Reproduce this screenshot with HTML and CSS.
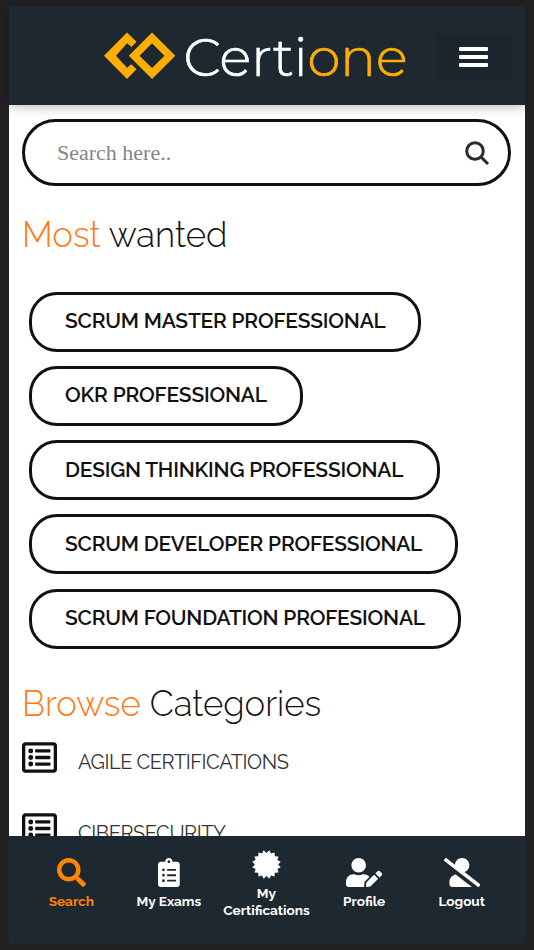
FILE: index.html
```
<!DOCTYPE html>
<html lang="en">
<head>
  <meta charset="UTF-8" />
  <meta name="viewport" content="width=device-width, initial-scale=1.0"/>
  <title>Certione</title>
  <link rel="stylesheet" href="styles.css">
</head>
<body>
  <div class="app">
    <header class="header">
      <svg class="logo" width="310" height="64" viewBox="0 0 310 64">
        <path class="logo-mark" d="M23 2.500L32.500 11.700L27.500 17L23 13.300L12 25.700L23 37.700L27.300 34.300L32.500 39.300L23 49L0 25.700Z" />
        <path class="logo-mark" fill-rule="evenodd" d="M48 2.500L71.300 25.700L48 49L24.800 25.700ZM48 13.300L35.500 25.700L48 38L60.500 25.700Z" />
        <text class="logo-text" x="79.500" y="46" textLength="224" lengthAdjust="spacingAndGlyphs">Certi<tspan class="logo-accent">one</tspan></text>
      </svg>
      <button class="menu-button" aria-label="Menu">
        <span class="menu-bar"></span>
        <span class="menu-bar"></span>
        <span class="menu-bar"></span>
      </button>
    </header>

    <main class="content">
      <form class="search">
        <input class="search-input" type="text" placeholder="Search here.." />
        <svg class="search-icon" width="26" height="26" viewBox="0 0 26 26">
          <circle cx="11" cy="11" r="8.300" />
          <path d="M17 17L24 24" />
        </svg>
      </form>

      <h2 class="title wanted-title"><span class="accent">Most</span> wanted</h2>
      <div class="wanted">
        <a class="pill scrum-master"><span>SCRUM MASTER PROFESSIONAL</span></a>
        <a class="pill okr"><span>OKR PROFESSIONAL</span></a>
        <a class="pill design"><span>DESIGN THINKING PROFESSIONAL</span></a>
        <a class="pill scrum-developer"><span>SCRUM DEVELOPER PROFESSIONAL</span></a>
        <a class="pill scrum-foundation"><span>SCRUM FOUNDATION PROFESIONAL</span></a>
      </div>

      <h2 class="title browse-title"><span class="accent">Browse</span> Categories</h2>
      <ul class="categories">
        <li class="category">
          <svg class="category-icon"><use href="#list-alt" /></svg>
          <span>AGILE CERTIFICATIONS</span>
        </li>
        <li class="category">
          <svg class="category-icon"><use href="#list-alt" /></svg>
          <span>CIBERSECURITY</span>
        </li>
      </ul>
    </main>

    <nav class="tabs">
      <a class="tab active">
        <svg class="tab-icon" viewBox="0 0 512 512"><path d="M505 442.700L405.300 343c-4.500-4.500-10.600-7-17-7H372c27.600-35.300 44-79.700 44-128C416 93.100 322.900 0 208 0S0 93.100 0 208s93.100 208 208 208c48.300 0 92.700-16.400 128-44v16.300c0 6.400 2.500 12.500 7 17l99.700 99.700c9.400 9.400 24.600 9.400 33.900 0l28.300-28.300c9.400-9.400 9.400-24.600.1-34zM208 336c-70.700 0-128-57.200-128-128 0-70.700 57.200-128 128-128 70.700 0 128 57.200 128 128 0 70.700-57.200 128-128 128z" /></svg>
        <span>Search</span>
      </a>
      <a class="tab">
        <svg class="tab-icon" viewBox="0 0 384 512"><path d="M336 64h-80c0-35.300-28.700-64-64-64s-64 28.700-64 64H48C21.500 64 0 85.500 0 112v352c0 26.500 21.500 48 48 48h288c26.500 0 48-21.500 48-48V112c0-26.500-21.500-48-48-48zM96 424c-13.300 0-24-10.700-24-24s10.700-24 24-24 24 10.700 24 24-10.700 24-24 24zm0-96c-13.300 0-24-10.700-24-24s10.700-24 24-24 24 10.700 24 24-10.700 24-24 24zm0-96c-13.300 0-24-10.700-24-24s10.700-24 24-24 24 10.700 24 24-10.700 24-24 24zm96-192c13.300 0 24 10.700 24 24s-10.700 24-24 24-24-10.700-24-24 10.700-24 24-24zm128 368c0 4.400-3.600 8-8 8H168c-4.400 0-8-3.600-8-8v-16c0-4.400 3.600-8 8-8h144c4.400 0 8 3.600 8 8v16zm0-96c0 4.400-3.600 8-8 8H168c-4.400 0-8-3.600-8-8v-16c0-4.400 3.600-8 8-8h144c4.400 0 8 3.600 8 8v16zm0-96c0 4.400-3.600 8-8 8H168c-4.400 0-8-3.600-8-8v-16c0-4.400 3.600-8 8-8h144c4.400 0 8 3.600 8 8v16z" /></svg>
        <span>My Exams</span>
      </a>
      <a class="tab">
        <svg class="tab-icon" viewBox="-15 -15 30 30"><path d="M0 -12L2.930 -14.700L4.670 -11.270L8.330 -12.470L8.630 -8.630L12.470 -8.330L11.270 -4.670L14.700 -2.930L12 0L14.700 2.930L11.270 4.670L12.470 8.330L8.630 8.630L8.330 12.470L4.670 11.270L2.930 14.700L0 12L-2.930 14.700L-4.670 11.270L-8.330 12.470L-8.630 8.630L-12.470 8.330L-11.270 4.670L-14.700 2.930L-12 0L-14.700 -2.930L-11.270 -4.670L-12.470 -8.330L-8.630 -8.630L-8.330 -12.470L-4.670 -11.270L-2.930 -14.700Z" /></svg>
        <span>My<br />Certifications</span>
      </a>
      <a class="tab">
        <svg class="tab-icon" viewBox="0 0 640 512"><path d="M224 256c70.700 0 128-57.300 128-128S294.700 0 224 0 96 57.300 96 128s57.300 128 128 128zm89.600 32h-16.700c-22.200 10.200-46.900 16-72.900 16s-50.600-5.800-72.900-16h-16.700C60.200 288 0 348.200 0 422.400V464c0 26.500 21.500 48 48 48h274.900c-2.400-6.800-3.400-14-2.600-21.300l6.800-60.900 1.200-11.100 7.900-7.900 77.300-77.300c-24.500-27.700-60-45.500-99.900-45.500zm45.300 145.300l-6.800 61c-1.100 10.200 7.500 18.800 17.600 17.600l60.900-6.800 137.900-137.900-71.700-71.700-137.900 137.800zM633 268.900L595.100 231c-9.300-9.300-24.500-9.300-33.800 0l-37.800 37.800-4.100 4.100 71.800 71.700 41.800-41.800c9.300-9.400 9.300-24.500 0-33.900z" /></svg>
        <span>Profile</span>
      </a>
      <a class="tab">
        <svg class="tab-icon" viewBox="0 0 640 512"><path d="M633.800 458.100L362.300 248.300C412.100 230.700 448 183.800 448 128 448 57.300 390.700 0 320 0c-67.100 0-121.500 51.800-126.900 117.400L45.500 3.400C38.500-2 28.500-.8 23 6.200L3.400 31.400c-5.400 7-4.200 17 2.800 22.400l588.400 454.700c7 5.500 17 4.200 22.500-2.800l19.600-25.300c5.400-6.800 4.100-16.900-2.900-22.300zM96 422.400V464c0 26.500 21.500 48 48 48h350.200L207.400 290.300C144.200 301.300 96 356 96 422.400z" /></svg>
        <span>Logout</span>
      </a>
    </nav>
  </div>

  <svg width="0" height="0" class="sprite">
    <symbol id="list-alt" viewBox="0 32 512 448">
      <path fill-rule="evenodd" d="M464 32H48C21.500 32 0 53.500 0 80v352c0 26.500 21.500 48 48 48h416c26.500 0 48-21.500 48-48V80c0-26.500-21.500-48-48-48zm-6 400H54a6 6 0 0 1-6-6V86a6 6 0 0 1 6-6h404a6 6 0 0 1 6 6v340a6 6 0 0 1-6 6z" />
      <circle cx="128" cy="160" r="36" />
      <circle cx="128" cy="256" r="36" />
      <circle cx="128" cy="352" r="36" />
      <rect x="192" y="136" width="224" height="48" rx="12" />
      <rect x="192" y="232" width="224" height="48" rx="12" />
      <rect x="192" y="328" width="224" height="48" rx="12" />
    </symbol>
  </svg>
</body>
</html>
```
FILE: styles.css
```
* {
  box-sizing: border-box;
}
body {
  margin: 0;
  height: 950px;
  padding: 6px 9.5px 7px 8.5px;
  background-color: #222224;
  font-family: Raleway, Lato, sans-serif;
  overflow: hidden;
}
.app {
  display: flex;
  flex-direction: column;
  height: 937px;
  background-color: white;
}
.header {
  display: flex;
  align-items: flex-start;
  flex-shrink: 0;
  height: 99px;
  padding: 24px 14px 0 95px;
  background-color: #1e2831;
  box-shadow: 0 1px 12px rgba(0, 0, 0, 0.3);
}
.logo {
  display: block;
  flex-shrink: 0;
  overflow: visible;
}
.logo-mark {
  fill: #ffae00;
}
.logo-text {
  font-family: Montserrat, Lato, sans-serif;
  font-size: 53px;
  font-weight: 300;
  fill: white;
  stroke: white;
  stroke-width: 0.7px;
}
.logo-accent {
  fill: #ffae00;
  stroke: #ffae00;
}
.menu-button {
  display: flex;
  flex-direction: column;
  align-items: center;
  justify-content: center;
  gap: 4px;
  width: 75px;
  height: 46px;
  margin: 4px 0 0 auto;
  padding: 0;
  border: none;
  border-radius: 4px;
  background-color: #1c252e;
}
.menu-bar {
  width: 29px;
  height: 4px;
  border-radius: 1px;
  background-color: white;
}
.content {
  flex: 1;
  min-height: 0;
  padding: 14px 14px 0 13.500px;
  overflow: hidden;
}
.search {
  display: flex;
  align-items: center;
  height: 67px;
  padding: 0 17.500px 0 32px;
  border: 3px solid #111;
  border-radius: 34px;
}
.search-input {
  flex: 1;
  min-width: 0;
  padding: 0;
  border: none;
  outline: none;
  background: none;
  font-family: "Liberation Serif", serif;
  font-size: 22px;
}
.search-input::placeholder {
  color: #858585;
}
.search-icon {
  fill: none;
  stroke: #2b2b2b;
  stroke-width: 3;
}
.title {
  margin: 0;
  font-size: 34.800px;
  font-weight: 300;
  line-height: 42px;
  color: #111;
  white-space: nowrap;
}
.accent {
  color: #ff7a14;
}
.wanted-title {
  margin-top: 28px;
}
.wanted {
  display: flex;
  flex-direction: column;
  align-items: flex-start;
  gap: 14.300px;
  margin: 35.500px 0 0 7px;
}
.pill {
  display: flex;
  align-items: center;
  height: 60px;
  padding: 0 0 2px 33px;
  border: 3px solid #111;
  border-radius: 28px;
  color: #111;
  font-size: 20.900px;
  font-weight: 600;
  letter-spacing: -0.200px;
  white-space: nowrap;
}
.scrum-master {
  width: 392px;
}
.okr {
  width: 274px;
}
.design {
  width: 411px;
}
.scrum-developer {
  width: 429px;
}
.scrum-foundation {
  width: 432px;
}
.browse-title {
  margin-top: 34px;
}
.categories {
  margin: 17px 0 0;
  padding: 0;
  list-style: none;
}
.category {
  display: flex;
  height: 71px;
  gap: 21px;
  color: #333;
  font-size: 20px;
  letter-spacing: -0.450px;
  line-height: 40px;
}
.category-icon {
  width: 35px;
  height: 31px;
  fill: #111;
}
.tabs {
  display: grid;
  grid-template-columns: repeat(5, 1fr);
  flex-shrink: 0;
  height: 107px;
  padding: 0 14px 11px;
  background-color: #1e2831;
}
.tab {
  display: flex;
  flex-direction: column;
  align-items: center;
  justify-content: center;
  gap: 6px;
  color: white;
  font-size: 13.600px;
  font-weight: bold;
  line-height: 17px;
  text-align: center;
}
.tab.active {
  color: #ff8400;
}
.tab-icon {
  height: 29px;
  fill: currentColor;
}
.sprite {
  display: block;
}
```
